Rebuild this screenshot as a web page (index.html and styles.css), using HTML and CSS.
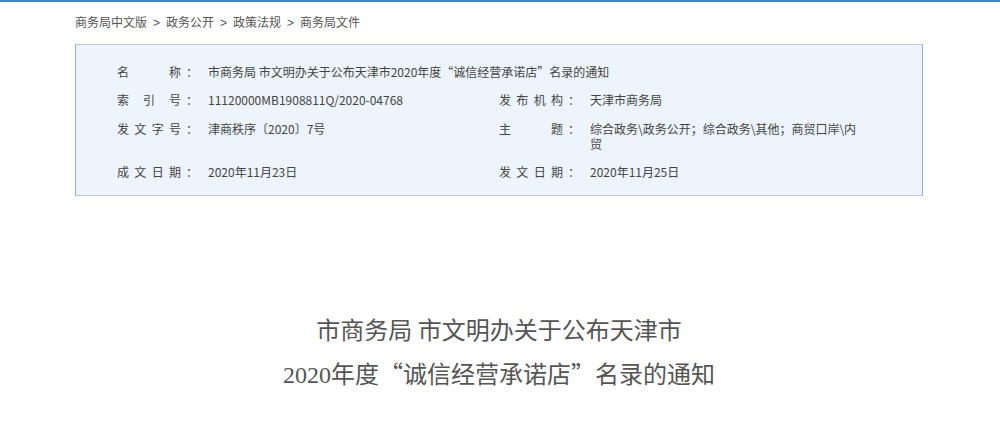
FILE: index.html
```html
<!DOCTYPE html>
<html lang="zh-CN">
<head>
  <meta charset="utf-8">
  <title>市商务局 市文明办关于公布天津市2020年度“诚信经营承诺店”名录的通知</title>
  <link rel="stylesheet" href="styles.css">
</head>
<body>
  <div class="topbar"></div>
  <div class="container">
    <div class="breadcrumb">
      <a href="#">商务局中文版</a><span class="sep">&gt;</span><a href="#">政务公开</a><span class="sep">&gt;</span><a href="#">政策法规</a><span class="sep">&gt;</span><a href="#">商务局文件</a>
    </div>

    <div class="info-box">
      <div class="item wide">
        <span class="label">名 称</span><span class="colon">：</span>
        <span class="value">市商务局 市文明办关于公布天津市2020年度“诚信经营承诺店”名录的通知</span>
      </div>
      <div class="item">
        <span class="label">索 引 号</span><span class="colon">：</span>
        <span class="value">11120000MB1908811Q/2020-04768</span>
      </div>
      <div class="item">
        <span class="label">发 布 机 构</span><span class="colon">：</span>
        <span class="value">天津市商务局</span>
      </div>
      <div class="item">
        <span class="label">发 文 字 号</span><span class="colon">：</span>
        <span class="value">津商秩序〔2020〕7号</span>
      </div>
      <div class="item">
        <span class="label">主 题</span><span class="colon">：</span>
        <span class="value">综合政务\政务公开；综合政务\其他；商贸口岸\内贸</span>
      </div>
      <div class="item">
        <span class="label">成 文 日 期</span><span class="colon">：</span>
        <span class="value">2020年11月23日</span>
      </div>
      <div class="item">
        <span class="label">发 文 日 期</span><span class="colon">：</span>
        <span class="value">2020年11月25日</span>
      </div>
    </div>

    <h1 class="title">市商务局 市文明办关于公布天津市<br><span class="num">2020</span>年度“诚信经营承诺店”名录的通知</h1>
  </div>
</body>
</html>
```

FILE: styles.css
```css
:root {
  --text-color: #444;
  --muted-color: #555;
  --bar-color: #3f86c6;
  --box-bg: #edf4fc;
  --box-border: #b3cdef;
  --box-side: #8eb1e2;
  --font-family: "Noto Sans CJK SC", "Noto Sans", sans-serif;
}

body {
  margin: 0;
  padding: 0;
  background: #fff;
  color: var(--text-color);
  font-family: var(--font-family);
  font-size: 12px;
}

.topbar {
  height: 2px;
  background: var(--bar-color);
}

.container {
  width: 848px;
  margin-left: 75px;
}

.breadcrumb {
  padding-top: 12px;
  line-height: 16px;
  color: var(--muted-color);
}

.breadcrumb a {
  color: var(--muted-color);
  text-decoration: none;
}

.breadcrumb .sep {
  margin: 0 6px;
  font-family: "Liberation Sans", sans-serif;
}

.info-box {
  margin-top: 13px;
  padding: 18.5px 62px 16px 41px;
  background: var(--box-bg);
  border-top: 1px solid var(--box-border);
  border-bottom: 1px solid var(--box-border);
  border-left: 1px solid var(--box-side);
  border-right: 1px solid var(--box-side);
  display: grid;
  grid-template-columns: 382px 1fr;
  row-gap: 13.5px;
  line-height: 15px;
}

.item {
  display: flex;
  align-items: flex-start;
}

.item.wide {
  grid-column: 1 / -1;
}

.label {
  width: 64px;
  flex-shrink: 0;
  text-align: justify;
  text-align-last: justify;
}

.colon {
  width: 27px;
  flex-shrink: 0;
  padding-left: 5px;
  box-sizing: border-box;
}

.value {
  flex: 1;
}

.title {
  margin: 111px 0 0;
  text-align: center;
  font-size: 24px;
  font-weight: normal;
  line-height: 44px;
  color: var(--muted-color);
}

.title .num {
  font-family: "Liberation Serif", serif;
}
```
